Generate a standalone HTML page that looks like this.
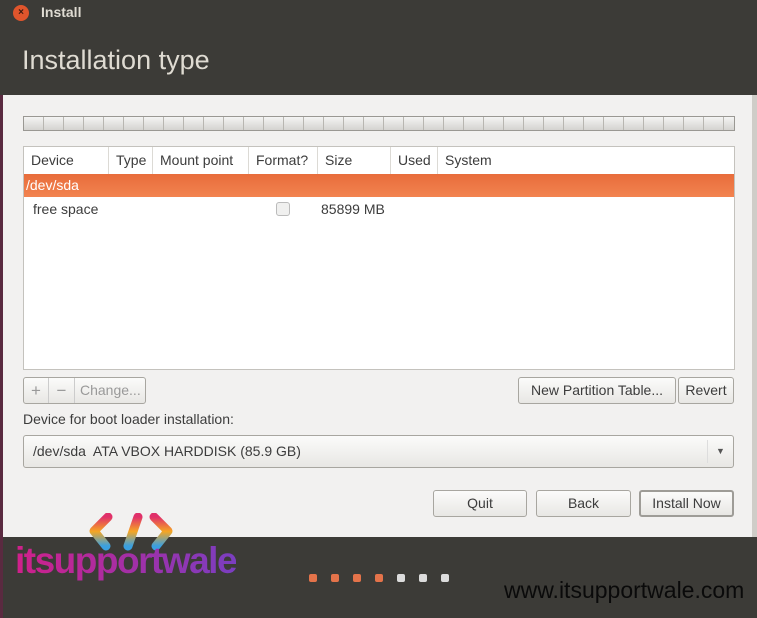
<!DOCTYPE html>
<html><head><style>
*{margin:0;padding:0;box-sizing:border-box}
body{width:757px;height:618px;overflow:hidden;background:#3c3b37;font-family:"Liberation Sans","DejaVu Sans",sans-serif;position:relative;font-size:14px;color:#3c3c3c}
.a{position:absolute}
.btn{position:absolute;border:1px solid #a8a6a0;border-radius:3px;background:linear-gradient(#fbfbfa,#e8e7e4);text-align:center;font-size:14px;color:#3c3c3c}
.hd{position:absolute;top:0;height:27px;line-height:27px;border-right:1px solid #dcdad5;padding-left:7px;font-size:14px;color:#3c3c3c}
</style></head><body>
<div class="a" style="left:0;top:0;width:3px;height:618px;background:#5a2a40"></div>
<div class="a" style="left:0;top:0;width:757px;height:95px;background:#3c3b37"></div>
<div class="a" style="left:13px;top:5px;width:16px;height:16px;border-radius:50%;background:#e0552c;color:#3c1a10;font-size:10px;line-height:16px;text-align:center;font-weight:bold">×</div>
<div class="a" style="left:41px;top:4px;color:#dfdbd2;font-weight:bold;font-size:14px">Install</div>
<div class="a" style="left:22px;top:45px;color:#dfdbd2;font-size:27px">Installation type</div>
<div class="a" style="left:3px;top:95px;width:749px;height:442px;background:#f2f1f0"></div>
<div class="a" style="left:752px;top:95px;width:5px;height:442px;background:#cfcdc8"></div>
<div class="a" style="left:23px;top:116px;width:712px;height:15px;border:1px solid #9a9893;background:repeating-linear-gradient(90deg,transparent 0 19px,#b8b6b1 19px 20px),linear-gradient(#f4f4f3,#d4d3d0)"></div>
<div class="a" style="left:23px;top:146px;width:712px;height:224px;background:#fff;border:1px solid #c4c2bd">
 <div class="hd" style="left:0;width:85px">Device</div>
 <div class="hd" style="left:85px;width:44px">Type</div>
 <div class="hd" style="left:129px;width:96px">Mount point</div>
 <div class="hd" style="left:225px;width:69px">Format?</div>
 <div class="hd" style="left:294px;width:73px">Size</div>
 <div class="hd" style="left:367px;width:47px">Used</div>
 <div class="hd" style="left:414px;width:296px;border:none">System</div>
 <div class="a" style="left:0;top:27px;width:710px;height:23px;background:linear-gradient(#e86c3b,#f28350);color:#fff;line-height:23px;padding-left:2px">/dev/sda</div>
 <div class="a" style="left:9px;top:54px">free space</div>
 <div class="a" style="left:252px;top:55px;width:14px;height:14px;border:1px solid #bbb;border-radius:3px;background:#f0f0ef"></div>
 <div class="a" style="left:297px;top:54px">85899 MB</div>
</div>
<div class="btn" style="left:23px;top:377px;width:123px;height:27px;color:#999;line-height:25px;text-align:left">
 <span style="position:absolute;left:0;width:25px;text-align:center;border-right:1px solid #ccc;font-size:17px">+</span>
 <span style="position:absolute;left:25px;width:26px;text-align:center;border-right:1px solid #ccc;font-size:17px">−</span>
 <span style="position:absolute;left:56px">Change...</span></div>
<div class="btn" style="left:518px;top:377px;width:158px;height:27px;line-height:25px">New Partition Table...</div>
<div class="btn" style="left:678px;top:377px;width:56px;height:27px;line-height:25px">Revert</div>
<div class="a" style="left:23px;top:411px">Device for boot loader installation:</div>
<div class="btn" style="left:23px;top:435px;width:711px;height:33px;line-height:31px;text-align:left;padding-left:9px">/dev/sda&nbsp; ATA VBOX HARDDISK (85.9 GB)
 <span style="position:absolute;right:0;top:4px;width:26px;height:23px;border-left:1px solid #ddd;text-align:center;line-height:23px;font-size:9px;color:#555">▼</span></div>
<div class="btn" style="left:433px;top:490px;width:94px;height:27px;line-height:25px">Quit</div>
<div class="btn" style="left:536px;top:490px;width:95px;height:27px;line-height:25px">Back</div>
<div class="btn" style="left:639px;top:490px;width:95px;height:27px;line-height:23px;border:2px solid #9e9c97">Install Now</div>
<svg class="a" style="left:88px;top:513px" width="90" height="38" viewBox="0 0 90 38">
 <defs><linearGradient id="g" x1="0" y1="0" x2="0" y2="1"><stop offset="0" stop-color="#e0306a"/><stop offset=".5" stop-color="#f5a623"/><stop offset="1" stop-color="#3aa0e0"/></linearGradient></defs>
 <path d="M20 4 L6 18 L18 33" stroke="url(#g)" stroke-width="9" fill="none" stroke-linecap="round" stroke-linejoin="round"/>
 <path d="M50 4 L40 33" stroke="url(#g)" stroke-width="9" fill="none" stroke-linecap="round"/>
 <path d="M66 4 L80 18 L68 33" stroke="url(#g)" stroke-width="9" fill="none" stroke-linecap="round" stroke-linejoin="round"/>
</svg>
<div class="a" style="left:15px;top:540px;font-size:37px;font-weight:bold;letter-spacing:-1.5px;background:linear-gradient(90deg,#d0208a,#7a3ec0);-webkit-background-clip:text;color:transparent">itsupportwale</div>
<div class="a" style="left:309px;top:574px;width:8px;height:8px;border-radius:2px;background:#e4734a"></div>
<div class="a" style="left:331px;top:574px;width:8px;height:8px;border-radius:2px;background:#e4734a"></div>
<div class="a" style="left:353px;top:574px;width:8px;height:8px;border-radius:2px;background:#e4734a"></div>
<div class="a" style="left:375px;top:574px;width:8px;height:8px;border-radius:2px;background:#e4734a"></div>
<div class="a" style="left:397px;top:574px;width:8px;height:8px;border-radius:2px;background:#dcdcdc"></div>
<div class="a" style="left:419px;top:574px;width:8px;height:8px;border-radius:2px;background:#dcdcdc"></div>
<div class="a" style="left:441px;top:574px;width:8px;height:8px;border-radius:2px;background:#dcdcdc"></div>
<div class="a" style="left:504px;top:577px;font-size:23px;color:#0a0a0a">www.itsupportwale.com</div>
</body></html>
